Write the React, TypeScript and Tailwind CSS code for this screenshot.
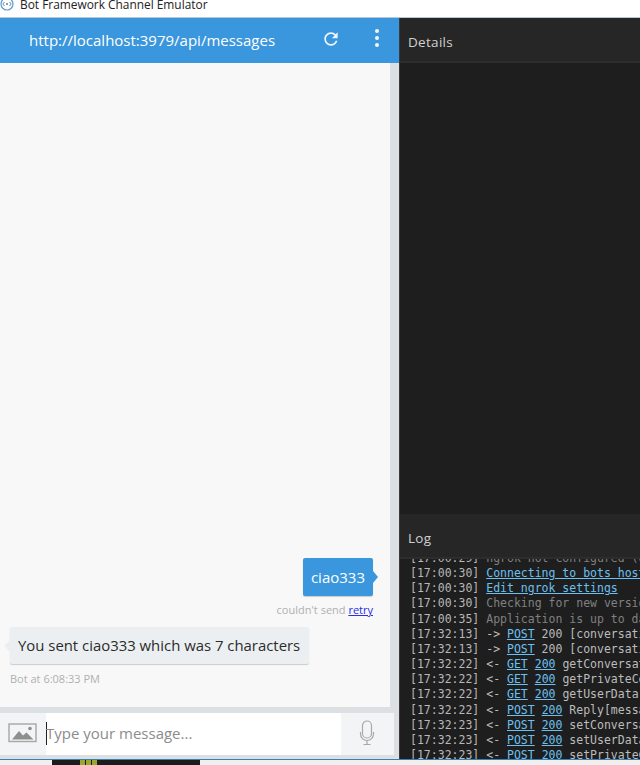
import React from "react";

const ui = { fontFamily: '"Open Sans", "Noto Sans", sans-serif' };
const mono = { fontFamily: '"DejaVu Sans Mono", monospace' };

type Seg = { t: string; link?: boolean; dim?: boolean };
const L = (t: string): Seg => ({ t, link: true });
const D = (t: string): Seg => ({ t, dim: true });
const T = (t: string): Seg => ({ t });

const logs: { time: string; segs: Seg[] }[] = [
  { time: "17:00:29", segs: [D("ngrok not configured (optional)")] },
  { time: "17:00:30", segs: [L("Connecting to bots hosted remotely")] },
  { time: "17:00:30", segs: [L("Edit ngrok settings")] },
  { time: "17:00:30", segs: [D("Checking for new version...")] },
  { time: "17:00:35", segs: [D("Application is up to date")] },
  { time: "17:32:13", segs: [T("-> "), L("POST"), T(" 200 [conversationUpdate]")] },
  { time: "17:32:13", segs: [T("-> "), L("POST"), T(" 200 [conversationUpdate]")] },
  { time: "17:32:22", segs: [T("<- "), L("GET"), T(" "), L("200"), T(" getConversationData")] },
  { time: "17:32:22", segs: [T("<- "), L("GET"), T(" "), L("200"), T(" getPrivateConversationData")] },
  { time: "17:32:22", segs: [T("<- "), L("GET"), T(" "), L("200"), T(" getUserData")] },
  { time: "17:32:22", segs: [T("<- "), L("POST"), T(" "), L("200"), T(" Reply[message]")] },
  { time: "17:32:23", segs: [T("<- "), L("POST"), T(" "), L("200"), T(" setConversationData")] },
  { time: "17:32:23", segs: [T("<- "), L("POST"), T(" "), L("200"), T(" setUserData")] },
  { time: "17:32:23", segs: [T("<- "), L("POST"), T(" "), L("200"), T(" setPrivateConversationData")] },
];

function Panel({ title }: { title: string }) {
  return (
    <div className="flex h-[45px] shrink-0 items-center border-b-2 border-[#2d2d2d] bg-[#262626] pl-2 pt-[5px] text-[13.5px] tracking-[0.3px] text-[#d0d0d0]">
      {title}
    </div>
  );
}

export default function App() {
  return (
    <div className="flex h-[765px] w-[640px] flex-col overflow-hidden bg-white" style={ui}>
      {/* Window title */}
      <div className="flex h-[18px] shrink-0 items-center gap-[6px] overflow-hidden border-b border-[#b5c7d6] bg-white text-[#222]">
        <svg width="14" height="14" viewBox="0 0 14 14" className="-mt-[10px] shrink-0" fill="none">
          <circle cx="7" cy="7" r="6" stroke="#5a9bd0" strokeWidth="1.2" />
          <path d="M4.5 5 2.8 7l1.7 2M9.5 5l1.7 2-1.7 2" stroke="#5a8fb8" />
          <circle cx="7" cy="7" r="1" fill="#777" />
        </svg>
        <span className="-mt-[10px] whitespace-nowrap text-[11.9px] leading-[14px]">Bot Framework Channel Emulator</span>
      </div>

      {/* Emulator */}
      <div className="flex min-h-0 flex-1">
        {/* Chat column */}
        <div className="flex w-[399px] shrink-0 flex-col bg-[#dde0e3]">
          <div className="flex h-[45px] shrink-0 items-center bg-[#3a96dd] pl-[29px] text-white">
            <span className="whitespace-nowrap text-[15px]">http://localhost:3979/api/messages</span>
            <svg width="20" height="20" viewBox="0 0 24 24" fill="#f1f7fc" className="ml-[46px] -mt-[3px] shrink-0">
              <path d="M17.65 6.35C16.2 4.9 14.21 4 12 4c-4.42 0-7.99 3.58-7.99 8s3.57 8 7.99 8c3.73 0 6.84-2.55 7.73-6h-2.08c-.82 2.33-3.04 4-5.65 4-3.31 0-6-2.69-6-6s2.69-6 6-6c1.66 0 3.14.69 4.22 1.78L13 11h7V4l-2.35 2.35z" />
            </svg>
            <div className="ml-[34px] -mt-[5px] flex shrink-0 flex-col gap-[3px]">
              <span className="h-[4px] w-[4px] rounded-full bg-[#f1f7fc]" />
              <span className="h-[4px] w-[4px] rounded-full bg-[#f1f7fc]" />
              <span className="h-[4px] w-[4px] rounded-full bg-[#f1f7fc]" />
            </div>
          </div>

          {/* Messages */}
          <div className="flex min-h-0 w-[390px] flex-1 flex-col justify-end bg-[#f8f8f8] pb-[21px]">
            <div className="flex flex-col items-end pr-[17px]">
              <div className="relative flex h-[38px] items-center rounded-[2px] bg-[#3a96dd] px-[8px] text-[15px] text-white shadow-[0_1px_1px_rgba(0,0,0,0.18)]">
                ciao333
                <span className="absolute -right-[5px] top-[13px] h-0 w-0 border-y-[6px] border-l-[5px] border-y-transparent border-l-[#3a96dd]" />
              </div>
              <div className="mt-[6px] text-[11px] leading-[15px] text-[#b0b0b0]">
                couldn't send <a className="text-[#2a2fe8] underline">retry</a>
              </div>
            </div>
            <div className="mt-[10px] flex flex-col items-start pl-[10px]">
              <div className="relative flex h-[37px] w-[299px] items-center whitespace-nowrap rounded-[2px] bg-[#eceff1] pl-[8px] text-[14.9px] text-[#2b2b2b] shadow-[0_1px_1px_rgba(0,0,0,0.18)]">
                You sent ciao333 which was 7 characters
                <span className="absolute -left-[6px] top-[13px] h-0 w-0 border-y-[6px] border-r-[6px] border-y-transparent border-r-[#eceff1]" />
              </div>
              <div className="mt-[7px] text-[11px] leading-[15px] text-[#b0b0b0]">Bot at 6:08:33 PM</div>
            </div>
          </div>

          {/* Input */}
          <div className="mt-[6px] flex h-[42px] w-[394px] shrink-0 items-center bg-[#f3f4f5]">
            <div className="flex w-[46px] shrink-0 justify-center">
              <svg width="30" height="20" viewBox="0 0 30 20" className="-mt-[2px]">
                <rect x="1" y="1" width="27" height="17.5" fill="none" stroke="#a6a6a6" strokeWidth="1.4" />
                <path d="M4 16.5 11 8l4 4.5 3.5-3 7 7z" fill="#8f8f8f" />
                <circle cx="22" cy="5.5" r="1.8" fill="#8f8f8f" />
              </svg>
            </div>
            <div className="flex h-full w-[295px] shrink-0 items-center bg-white text-[15px] text-[#8c8c8c]">
              <span className="-mt-[2px] h-[23px] w-[1px] bg-[#222]" />
              <span className="-ml-[1px] -mt-[2px] whitespace-nowrap">Type your message...</span>
            </div>
            <div className="flex flex-1 justify-center">
              <svg width="16" height="26" viewBox="0 0 16 26" fill="none" stroke="#a8a8a8" strokeWidth="1.2" className="-mt-[2px] -ml-[1px]">
                <rect x="3.5" y="1" width="9" height="17" rx="4.5" />
                <path d="M1.5 12v2a6.5 6.5 0 0 0 13 0v-2M8 20.5V24M4.5 24.5h7" />
              </svg>
            </div>
          </div>
          <div className="h-[4px] shrink-0" />
        </div>

        {/* Right column */}
        <div className="flex min-w-0 flex-1 flex-col border-l border-[#3a3a3a] bg-[#1e1e1e]">
          <Panel title="Details" />
          <div className="flex-1 bg-[#1e1e1e]" />
          <Panel title="Log" />
          <div className="h-[200px] shrink-0 overflow-hidden whitespace-nowrap pl-[10px] text-[11.5px] leading-[15.17px] text-[#bcbcbc]" style={mono}>
            <div className="-mt-[8px]">
              {logs.map((l, i) => (
                <div key={i} className="h-[15.17px]">
                  <span className="text-[#b8b8b8]">[{l.time}]</span>{" "}
                  {l.segs.map((s, j) =>
                    s.link ? (
                      <a key={j} className="text-[#6cc0f0] underline">{s.t}</a>
                    ) : (
                      <span key={j} className={s.dim ? "text-[#808080]" : ""}>{s.t}</span>
                    )
                  )}
                </div>
              ))}
            </div>
          </div>
        </div>
      </div>

      {/* Bottom edge */}
      <div className="h-[6px] shrink-0 border-t border-[#3a7fb5] bg-[#f0f0f0]">
        <div className="ml-[52px] flex h-[5px] w-[148px] bg-[#1c1c1c] pl-[28px]">
          <span className="h-full w-[5px] bg-[#9aa82c]" />
          <span className="ml-[1px] h-full w-[5px] bg-[#9aa82c]" />
          <span className="ml-[1px] h-full w-[5px] bg-[#9aa82c]" />
        </div>
      </div>
    </div>
  );
}
